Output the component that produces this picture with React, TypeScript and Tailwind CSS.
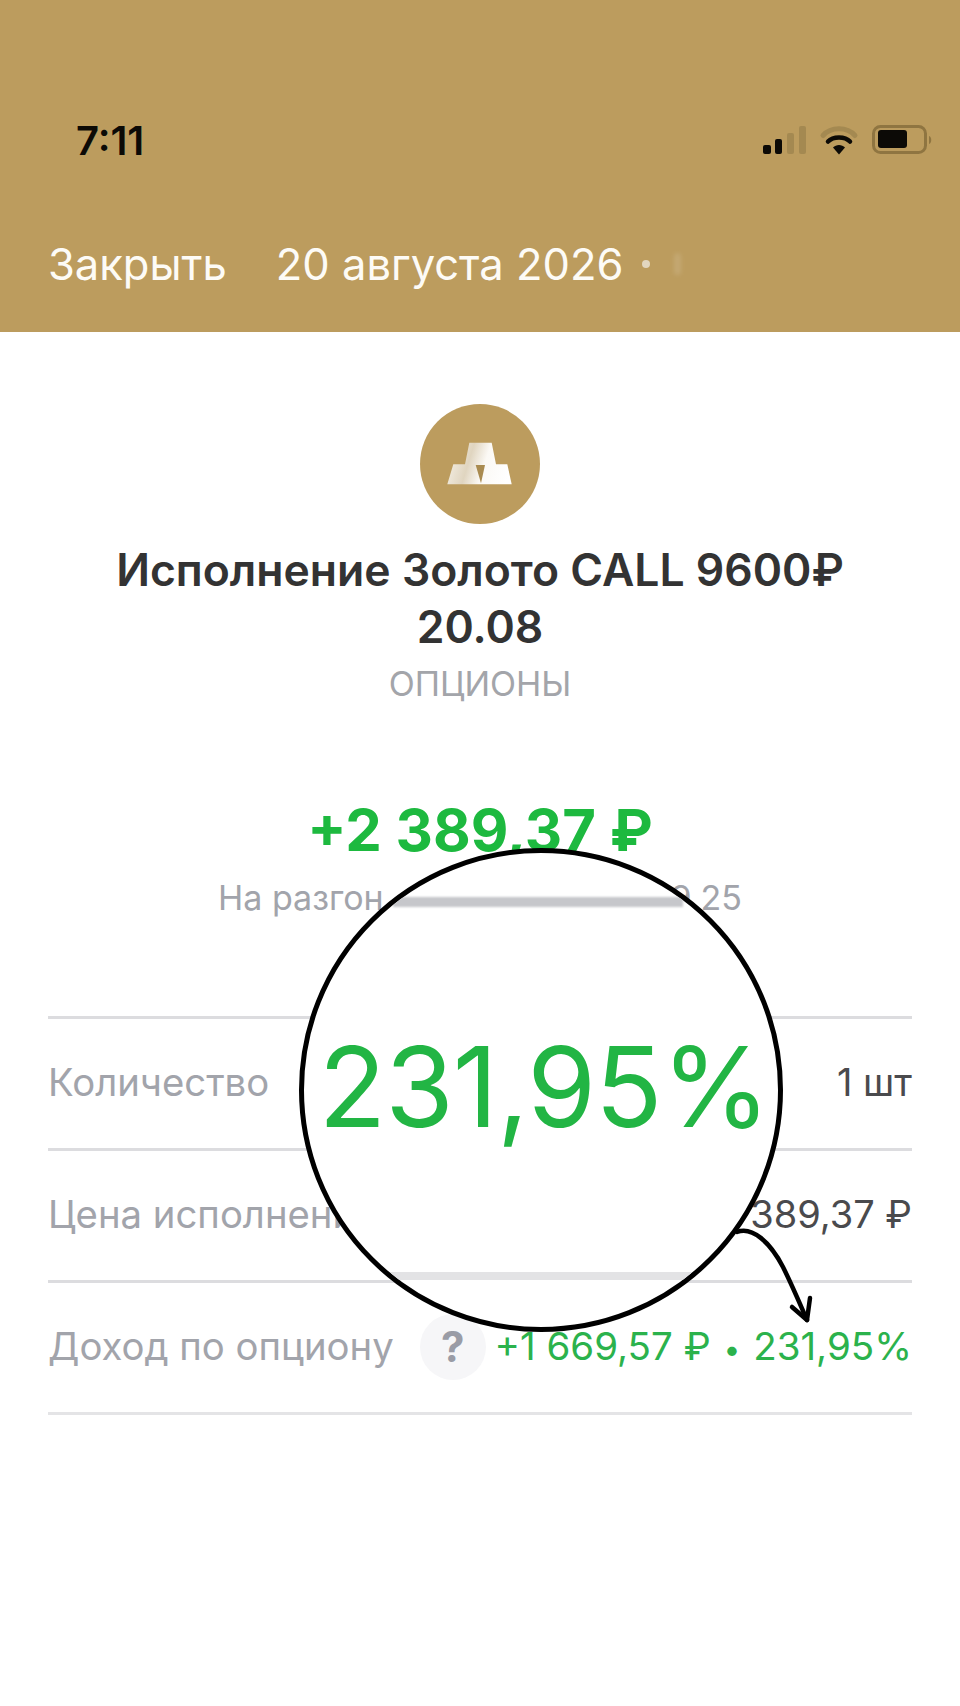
import { ReactNode } from 'react';

function StatusIcons() {
  return (
    <div className="flex items-center">
      <svg width="170" height="34" viewBox="0 0 170 34" fill="none">
        <rect x="1" y="20" width="8" height="9" rx="2" fill="#0c0a06" />
        <rect x="13" y="14" width="7" height="15" rx="2" fill="#0c0a06" />
        <rect x="25" y="8" width="7" height="21" rx="2" fill="#a48951" />
        <rect x="37" y="1" width="7" height="28" rx="2" fill="#a48951" />
        <path d="M61 10.5C69 1.5 85 1.5 93 10.5" stroke="#a48951" strokeWidth="5" strokeLinecap="round" />
        <path d="M66 16.5C71 11 83 11 88 16.5" stroke="#0c0a06" strokeWidth="4.5" strokeLinecap="round" />
        <path d="M71 22.5C74 19 80 19 83 22.5L77 29.5Z" fill="#0c0a06" />
        <rect x="111.5" y="1.5" width="52" height="26" rx="7" stroke="#8f7541" strokeWidth="3" />
        <rect x="116" y="5" width="29" height="18" rx="3" fill="#0c0a06" />
        <path d="M167 11C170 12 170 18 167 19Z" fill="#8f7541" />
      </svg>
    </div>
  );
}

function GoldIcon() {
  return (
    <div className="h-[120px] w-[120px] rounded-full bg-[#bc9c5e]">
      <svg width="120" height="120" viewBox="0 0 120 120">
        <defs>
          <linearGradient id="bar" x1="0" y1="0.3" x2="1" y2="0.5">
            <stop offset="0" stopColor="#f5f0e6" />
            <stop offset="0.35" stopColor="#e0d5c0" />
            <stop offset="0.6" stopColor="#fbf9f5" />
            <stop offset="1" stopColor="#ffffff" />
          </linearGradient>
        </defs>
        <path d="M49.3 38.7H71.7L76 60.3H87.3L91.7 80.3H27.3L33.3 60.3H45Z" fill="url(#bar)" />
        <path d="M55.7 61H65L61 79.3Z" fill="#a98b50" />
      </svg>
    </div>
  );
}

function Row({ label, children }: { label: ReactNode; children: ReactNode }) {
  return (
    <div className="flex h-[132px] items-center justify-between border-t-[3px] border-[#dcdcdf] pb-[2px]">
      <div className="flex items-center text-[38.3px] text-[#a2a4ab]">{label}</div>
      <div className="text-[38px]">{children}</div>
    </div>
  );
}

function Magnifier() {
  return (
    <div className="absolute left-[299px] top-[848px] h-[484px] w-[484px] overflow-hidden rounded-full border-[5px] border-black bg-white">
      <div className="absolute left-[89px] top-[44px] h-[10px] w-[290px] bg-[#c6c7cb] blur-[1px]" />
      <div className="absolute left-[6px] right-0 top-[178px] text-center text-[111px] leading-[112px] tracking-[-1px] text-[#22b544] blur-[0.6px]">
        231,95%
      </div>
      <div className="absolute left-[87px] top-[419px] h-[8px] w-[300px] bg-[#e3e3e5]" />
    </div>
  );
}

function Arrow() {
  return (
    <svg className="absolute left-[730px] top-[1222px]" width="90" height="104" viewBox="0 0 90 104" fill="none">
      <path d="M7 10C22 4 40 20 53 45C62 63 70 82 77 98" stroke="#000" strokeWidth="4.5" strokeLinecap="round" />
      <path d="M62 85L77 98L80 76" stroke="#000" strokeWidth="4.5" strokeLinecap="round" strokeLinejoin="round" />
    </svg>
  );
}

export default function App() {
  return (
    <div className="relative h-[1706px] w-full overflow-hidden bg-white font-['Inter',sans-serif]">
      <header className="h-[332px] bg-[#bc9c5e] px-[48px]">
        <div className="flex items-center justify-between pl-[28px] pt-[118px]">
          <span className="text-[40px] font-semibold leading-[46px] text-[#0c0a06]">7:11</span>
          <div className="-mr-[20px] mt-[2px]">
            <StatusIcons />
          </div>
        </div>
        <div className="mt-[75px] flex items-center text-[43.5px] leading-[50px] text-[#fdfbf6]">
          <span>Закрыть</span>
          <span className="ml-[49px]">20 августа 2026</span>
          <span className="ml-[19px] h-[8px] w-[8px] rounded-full bg-[#e2d6bf]" />
          <span className="ml-[24px] h-[22px] w-[7px] rounded-full bg-[#d6c4a0] opacity-30 blur-[2px]" />
        </div>
      </header>
      <main className="flex flex-col items-center px-[48px] pt-[72px]">
        <GoldIcon />
        <h1 className="mt-[18px] w-[800px] text-center text-[44.5px] font-semibold leading-[57px] text-[#333333]">
          Исполнение Золото CALL 9600₽ 20.08
        </h1>
        <div className="mt-[8px] text-[34px] leading-[40px] text-[#a3a5aa]">ОПЦИОНЫ</div>
        <div className="mt-[91px] text-[58px] font-bold leading-[70px] text-[#1db93f]">+2 389,37 ₽</div>
        <div className="mt-[13px] flex w-[524px] justify-between text-[34px] leading-[40px] text-[#a2a4ab]">
          <span>На разгон</span>
          <span>9,25</span>
        </div>
        <div className="mt-[98px] w-full border-b-[3px] border-[#e4e4e6]">
          <Row label="Количество">
            <span className="text-[#4a4a4d]">1 шт</span>
          </Row>
          <Row label="Цена исполнения">
            <span className="text-[#4a4a4d]">2 389,37 ₽</span>
          </Row>
          <Row
            label={
              <>
                <span>Доход по опциону</span>
                <span className="ml-[26px] flex h-[66px] w-[66px] items-center justify-center rounded-full bg-[#f6f6f8] text-[42px] font-bold text-[#9a9ca6]">
                  ?
                </span>
              </>
            }
          >
            <span className="text-[38.5px] text-[#2bb24c]">
              +1 669,57 ₽ <span className="mx-[2px] text-[30px]">•</span> 231,95%
            </span>
          </Row>
        </div>
      </main>
      <Magnifier />
      <Arrow />
    </div>
  );
}
